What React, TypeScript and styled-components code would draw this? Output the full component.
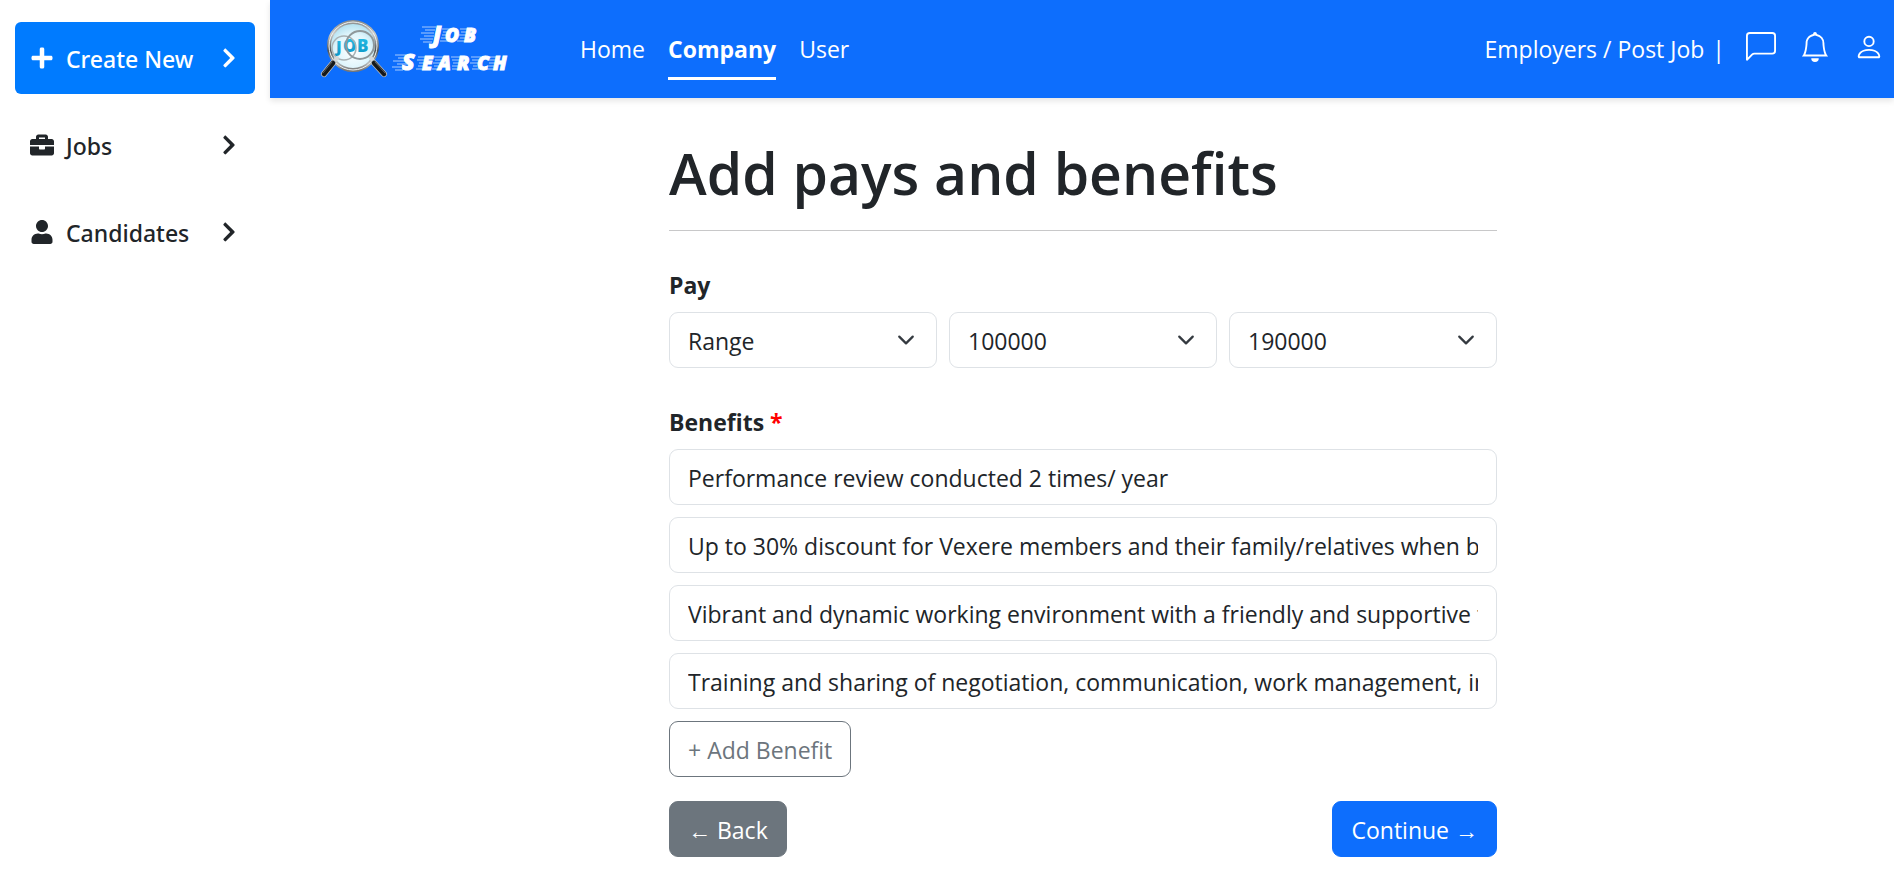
import React from "react";
import styled, { createGlobalStyle } from "styled-components";
import type { IconType } from "react-icons";
import { FaBriefcase, FaChevronRight, FaPlus, FaUser } from "react-icons/fa";
import { BsBell, BsChatLeft, BsPerson } from "react-icons/bs";

const GlobalStyle = createGlobalStyle`
  *, *::before, *::after { box-sizing: border-box; }
  body {
    margin: 0;
    background: #fff;
    color: #212529;
    font-family: "Open Sans", "Noto Sans", sans-serif;
    font-size: 23px;
    line-height: 36px;
  }
  button, input, select { font: inherit; color: inherit; }
`;

const Layout = styled.div`
  display: grid;
  grid-template-columns: 270px minmax(0, 1fr);
  min-height: 100vh;
`;

const Sidebar = styled.nav`
  display: flex;
  flex-direction: column;
  gap: 15px;
  padding: 22px 15px;
`;

const SidebarButton = styled.button<{ $active?: boolean }>`
  display: flex;
  align-items: center;
  gap: 12px;
  height: 72px;
  padding: 0 15px;
  border: 0;
  border-radius: 6px;
  background: ${(p) => (p.$active ? "#007bff" : "transparent")};
  color: ${(p) => (p.$active ? "#fff" : "#212529")};
  font-family: "Noto Sans", sans-serif;
  font-weight: 500;
  text-align: left;
  cursor: pointer;
`;

const SidebarLabel = styled.span`
  flex: 1;
  padding-top: 2px;
  white-space: nowrap;
`;

const Content = styled.div`
  display: flex;
  flex-direction: column;
  min-width: 0;
`;

const Header = styled.header`
  display: flex;
  align-items: center;
  height: 98px;
  padding: 0 10px 0 48px;
  background: #0d6efd;
  color: #fff;
  box-shadow: 0 3px 6px rgba(0, 0, 0, 0.1);
`;

const LogoLink = styled.a`
  display: flex;
  margin-right: 68px;
`;

const NavList = styled.nav`
  display: flex;
  gap: 23px;
`;

const NavLink = styled.a<{ $active?: boolean }>`
  padding: 12px 0 10px;
  border-bottom: 3px solid ${(p) => (p.$active ? "#fff" : "transparent")};
  color: #fff;
  font-weight: ${(p) => (p.$active ? 700 : 400)};
  text-decoration: none;
`;

const HeaderTools = styled.div`
  display: flex;
  align-items: center;
  gap: 24px;
  margin-left: auto;
`;

const Breadcrumb = styled.div`
  display: flex;
  gap: 8px;
  margin-right: -3px;
  white-space: nowrap;
`;

const IconButton = styled.button`
  display: flex;
  padding: 0 0 4px;
  border: 0;
  background: none;
  color: #fff;
  font-size: 30px;
  cursor: pointer;
`;

const Main = styled.main`
  padding: 41px 12px 18px 14px;
`;

const Form = styled.form`
  display: flex;
  flex-direction: column;
  max-width: 828px;
  margin: 0 auto;
`;

const Title = styled.h1`
  margin: 0;
  font-size: 57px;
  font-weight: 600;
  line-height: 68px;
`;

const Rule = styled.hr`
  width: 100%;
  margin: 23px 0 36px;
  border: 0;
  border-top: 1px solid #c8c8c9;
`;

const FieldSet = styled.fieldset`
  min-width: 0;
  margin: 0;
  padding: 0;
  border: 0;
`;

const Legend = styled.legend`
  padding: 0 0 9px;
  font-weight: 700;
`;

const Required = styled.span`
  color: #f00;
`;

const PayRow = styled.div`
  display: grid;
  grid-template-columns: repeat(3, minmax(0, 1fr));
  gap: 12px;
  margin-bottom: 36px;
`;

const SelectBox = styled.div`
  display: grid;
  align-items: center;

  > * { grid-area: 1 / 1; }
`;

const Select = styled.select`
  appearance: none;
  height: 56px;
  padding: 2px 54px 0 18px;
  border: 1px solid #dee2e6;
  border-radius: 9px;
  background: #fff;
`;

const Caret = styled.svg`
  justify-self: end;
  width: 24px;
  height: 18px;
  margin-right: 19px;
  pointer-events: none;
`;

const BenefitList = styled.div`
  display: flex;
  flex-direction: column;
  align-items: flex-start;
  gap: 12px;
`;

const TextInput = styled.input`
  width: 100%;
  height: 56px;
  padding: 2px 18px 0;
  border: 1px solid #dee2e6;
  border-radius: 9px;
  background: #fff;
`;

const buttonLooks = {
  primary: { background: "#0d6efd", border: "#0d6efd", color: "#fff" },
  secondary: { background: "#6c757d", border: "#6c757d", color: "#fff" },
  outline: { background: "transparent", border: "#6c757d", color: "#6c757d" },
};

const Button = styled.button<{ $look: keyof typeof buttonLooks }>`
  height: 56px;
  padding: 2px 18px 0;
  border: 1px solid ${(p) => buttonLooks[p.$look].border};
  border-radius: 9px;
  background: ${(p) => buttonLooks[p.$look].background};
  color: ${(p) => buttonLooks[p.$look].color};
  white-space: nowrap;
  cursor: pointer;
`;

const Actions = styled.div`
  display: flex;
  justify-content: space-between;
  margin-top: 24px;
`;

const LogoText = styled.text`
  fill: #fff;
  stroke: #fff;
  stroke-width: 1px;
  font-family: "Open Sans", sans-serif;
  font-style: italic;
  font-weight: 800;
`;

const LensText = styled.text`
  font-family: "Open Sans", sans-serif;
  font-weight: 800;
`;

type Letter = { char: string; x: number; y: number; size: number };

const logoLetters: Letter[] = [
  { char: "J", x: 115, y: 28, size: 22 },
  { char: "O", x: 127, y: 28, size: 19 },
  { char: "B", x: 146, y: 28, size: 19 },
  { char: "S", x: 84, y: 56, size: 23 },
  { char: "E", x: 104, y: 56, size: 19 },
  { char: "A", x: 120, y: 56, size: 19 },
  { char: "R", x: 139, y: 56, size: 19 },
  { char: "C", x: 159, y: 56, size: 19 },
  { char: "H", x: 175, y: 56, size: 19 },
];

function Logo() {
  return (
    <svg width="194" height="70" viewBox="0 0 194 70" role="img" aria-label="Job Search">
      <defs>
        <linearGradient id="ring" x1="0" y1="0" x2="0" y2="1">
          <stop offset="0" stopColor="#8b8f90" />
          <stop offset="0.25" stopColor="#c9cccc" />
          <stop offset="0.6" stopColor="#4a4f52" />
          <stop offset="0.85" stopColor="#b9bdbe" />
          <stop offset="1" stopColor="#777" />
        </linearGradient>
        <radialGradient id="glass" cx="0.5" cy="0.6" r="0.6">
          <stop offset="0" stopColor="#fff" />
          <stop offset="0.6" stopColor="#dff5fc" />
          <stop offset="1" stopColor="#a9dcee" />
        </radialGradient>
        <linearGradient id="letters" x1="0" y1="0" x2="0" y2="1">
          <stop offset="0" stopColor="#2cc3ea" />
          <stop offset="1" stopColor="#0a93c4" />
        </linearGradient>
      </defs>
      <circle cx="35" cy="32" r="24" fill="url(#glass)" stroke="url(#ring)" strokeWidth="4" />
      <circle cx="35" cy="32" r="24" fill="none" stroke="#eef1f1" strokeWidth="1" />
      <LensText x="18" y="38" fontSize="16" fill="url(#letters)">J</LensText>
      <LensText x="25" y="38" fontSize="17" fill="url(#letters)">O</LensText>
      <LensText x="39" y="38" fontSize="17" fill="url(#letters)">B</LensText>
      <circle cx="26" cy="34" r="12" fill="none" stroke="#a9b2b5" strokeWidth="1.5" />
      <circle cx="42" cy="31" r="14" fill="none" stroke="#8f989b" strokeWidth="2" />
      <g strokeLinecap="round">
        <path d="M19 44 L14 50 M53 44 L57 50" stroke="#d5d8d8" strokeWidth="4" />
        <path d="M15 49 L6 60 M56 49 L66 60" stroke="#b9bcbe" strokeWidth="6" />
        <path d="M15 49 L6 60 M56 49 L66 60" stroke="#16191b" strokeWidth="4.5" />
        <path d="M14 48 L5 59 M57 48 L67 59" stroke="#5b6064" strokeWidth="1" />
      </g>
      <g stroke="#fff" strokeWidth="0.8" opacity="0.8">
        <path d="M104 13H118 M107 16H117 M103 19H116 M106 22H116 M102 25H115 M105 28H114" />
        <path d="M124 15H132 M125 18H130 M124 21H129 M123 24H129 M122 27H130" />
        <path d="M142 15H150 M143 18H149 M141 21H149 M142 24H148 M139 27H147" />
        <path d="M77 41H88 M80 44H87 M75 47H88 M79 50H90 M74 53H85 M77 56H85" />
        <path d="M100 43H108 M99 46H107 M101 49H106 M100 52H105 M98 55H104" />
        <path d="M116 43H127 M117 46H125 M115 49H123 M116 52H121 M114 55H119" />
        <path d="M133 43H143 M134 46H142 M135 49H141 M134 52H140 M134 55H139" />
        <path d="M153 43H163 M154 46H161 M152 49H160 M155 52H159 M154 55H161" />
        <path d="M170 43H179 M169 46H178 M171 49H177 M169 52H176 M170 55H175" />
      </g>
      {logoLetters.map((l) => (
        <LogoText key={`${l.char}${l.x}`} x={l.x} y={l.y} fontSize={l.size}>
          {l.char}
        </LogoText>
      ))}
    </svg>
  );
}

const sidebarItems: { label: string; icon: IconType; active?: boolean }[] = [
  { label: "Create New", icon: FaPlus, active: true },
  { label: "Jobs", icon: FaBriefcase },
  { label: "Candidates", icon: FaUser },
];

const navItems = [
  { label: "Home", active: false },
  { label: "Company", active: true },
  { label: "User", active: false },
];

const tools: { label: string; icon: IconType }[] = [
  { label: "Messages", icon: BsChatLeft },
  { label: "Notifications", icon: BsBell },
  { label: "Account", icon: BsPerson },
];

const payFields = [
  { label: "Pay type", options: ["Range", "Fixed"] },
  { label: "Minimum pay", options: ["100000", "120000"] },
  { label: "Maximum pay", options: ["190000", "210000"] },
];

const benefits = [
  "Performance review conducted 2 times/ year",
  "Up to 30% discount for Vexere members and their family/relatives when buying tickets",
  "Vibrant and dynamic working environment with a friendly and supportive team",
  "Training and sharing of negotiation, communication, work management, interpersonal skills",
];

export default function App() {
  return (
    <>
      <GlobalStyle />
      <Layout>
        <Sidebar aria-label="Employer menu">
          {sidebarItems.map(({ label, icon: Icon, active }) => (
            <SidebarButton key={label} type="button" $active={active}>
              <Icon size={24} />
              <SidebarLabel>{label}</SidebarLabel>
              <FaChevronRight size={22} />
            </SidebarButton>
          ))}
        </Sidebar>
        <Content>
          <Header>
            <LogoLink href="#">
              <Logo />
            </LogoLink>
            <NavList aria-label="Main">
              {navItems.map((item) => (
                <NavLink key={item.label} href="#" $active={item.active}>
                  {item.label}
                </NavLink>
              ))}
            </NavList>
            <HeaderTools>
              <Breadcrumb>
                <span>Employers / Post Job</span>
                <span>|</span>
              </Breadcrumb>
              {tools.map(({ label, icon: Icon }) => (
                <IconButton key={label} type="button" aria-label={label}>
                  <Icon />
                </IconButton>
              ))}
            </HeaderTools>
          </Header>
          <Main>
            <Form onSubmit={(e) => e.preventDefault()}>
              <Title>Add pays and benefits</Title>
              <Rule />
              <FieldSet>
                <Legend>Pay</Legend>
                <PayRow>
                  {payFields.map((field) => (
                    <SelectBox key={field.label}>
                      <Select aria-label={field.label}>
                        {field.options.map((option) => (
                          <option key={option}>{option}</option>
                        ))}
                      </Select>
                      <Caret viewBox="0 0 16 16" aria-hidden="true">
                        <path
                          d="m2 5 6 6 6-6"
                          fill="none"
                          stroke="#343a40"
                          strokeWidth="2"
                          strokeLinecap="round"
                          strokeLinejoin="round"
                        />
                      </Caret>
                    </SelectBox>
                  ))}
                </PayRow>
              </FieldSet>
              <FieldSet>
                <Legend>
                  Benefits <Required>*</Required>
                </Legend>
                <BenefitList>
                  {benefits.map((benefit, index) => (
                    <TextInput
                      key={benefit}
                      type="text"
                      aria-label={`Benefit ${index + 1}`}
                      defaultValue={benefit}
                    />
                  ))}
                  <Button type="button" $look="outline">
                    + Add Benefit
                  </Button>
                </BenefitList>
              </FieldSet>
              <Actions>
                <Button type="button" $look="secondary">
                  ← Back
                </Button>
                <Button type="submit" $look="primary">
                  Continue →
                </Button>
              </Actions>
            </Form>
          </Main>
        </Content>
      </Layout>
    </>
  );
}
